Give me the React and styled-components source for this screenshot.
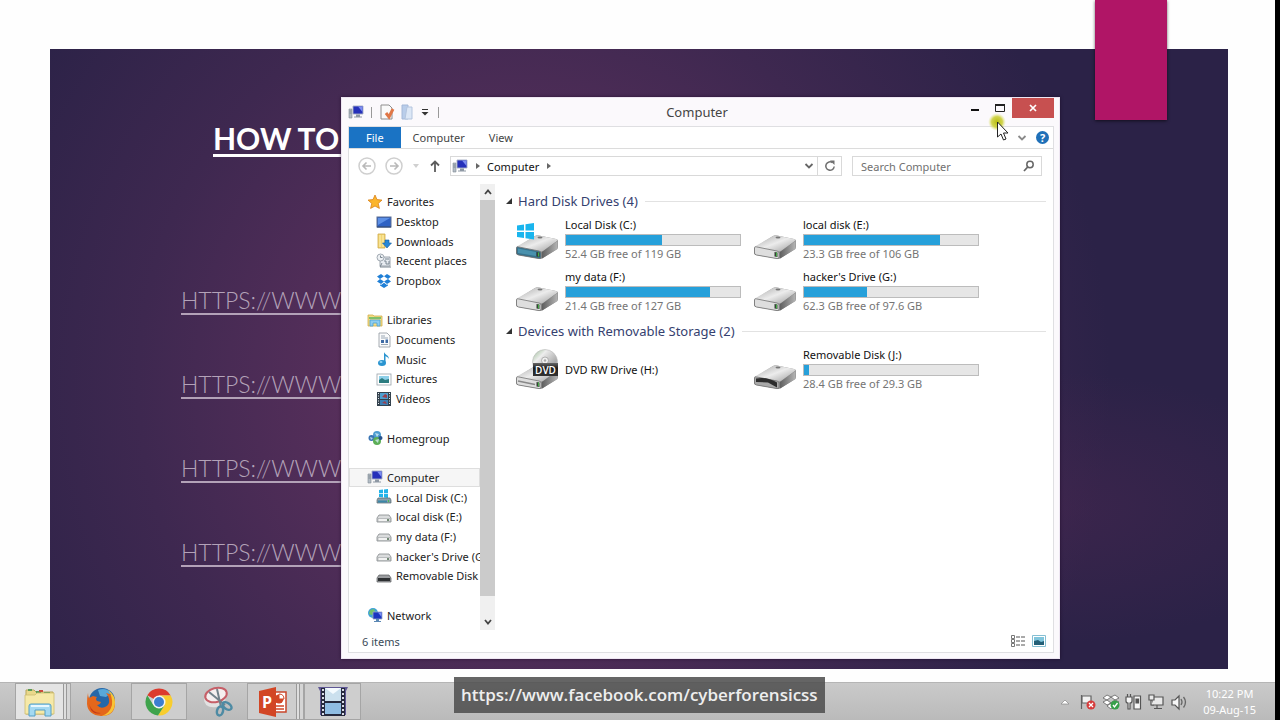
import React from 'react';
import styled, { createGlobalStyle } from 'styled-components';

const places = [
  { label: 'Favorites', icon: 'star', top: true },
  { label: 'Desktop', icon: 'desktop' },
  { label: 'Downloads', icon: 'downloads' },
  { label: 'Recent places', icon: 'recent' },
  { label: 'Dropbox', icon: 'dropbox' },
  null,
  { label: 'Libraries', icon: 'libraries', top: true },
  { label: 'Documents', icon: 'documents' },
  { label: 'Music', icon: 'music' },
  { label: 'Pictures', icon: 'pictures' },
  { label: 'Videos', icon: 'videos' },
  null,
  { label: 'Homegroup', icon: 'homegroup', top: true },
  null,
  { label: 'Computer', icon: 'computer', top: true, active: true },
  { label: 'Local Disk (C:)', icon: 'system' },
  { label: 'local disk (E:)', icon: 'drive' },
  { label: 'my data (F:)', icon: 'drive' },
  { label: "hacker's Drive (G:)", icon: 'drive' },
  { label: 'Removable Disk (J:)', icon: 'removable' },
  null,
  { label: 'Network', icon: 'network', top: true },
];

const groups = [
  {
    title: 'Hard Disk Drives (4)',
    drives: [
      { name: 'Local Disk (C:)', used: 55, info: '52.4 GB free of 119 GB', kind: 'system' },
      { name: 'local disk (E:)', used: 78, info: '23.3 GB free of 106 GB' },
      { name: 'my data (F:)', used: 83, info: '21.4 GB free of 127 GB' },
      { name: "hacker's Drive (G:)", used: 36, info: '62.3 GB free of 97.6 GB' },
    ],
  },
  {
    title: 'Devices with Removable Storage (2)',
    drives: [
      { name: 'DVD RW Drive (H:)', kind: 'dvd' },
      { name: 'Removable Disk (J:)', used: 3, info: '28.4 GB free of 29.3 GB', kind: 'removable' },
    ],
  },
];

const links = ['HTTPS://WWW', 'HTTPS://WWW', 'HTTPS://WWW', 'HTTPS://WWW'];

const glyphs = {
  star: (
    <path d="M8 1l2 4.6 5 .5-3.800 3.300 1.200 5L8 12l-4.400 2.400 1.200-5L1 6.100l5-.5z" fill="#fbb52c" stroke="#d9821a" strokeWidth=".8" />
  ),
  desktop: (
    <>
      <rect x="1" y="3" width="14" height="10" fill="#2f62c4" stroke="#5a6d92" />
      <path d="M2 4h12L2 11z" fill="#5d90e6" />
      <path d="M1 13h14" stroke="#25406f" />
    </>
  ),
  downloads: (
    <>
      <path d="M2 1h7v14H2z" fill="#f2d675" stroke="#cfa94a" strokeWidth=".8" />
      <path d="M4 2v12M7 2v12" stroke="#fff0b4" />
      <path d="M9 7h4v3h2.500L11 15 6.500 10H9z" fill="#2788d8" stroke="#14609f" strokeWidth=".6" />
    </>
  ),
  recent: (
    <>
      <path d="M4 4h10v9H4z" fill="#e7ecf1" stroke="#87919b" strokeWidth=".8" />
      <circle cx="4.500" cy="4.500" r="3.500" fill="#eef1f4" stroke="#8d97a1" strokeWidth=".8" />
      <path d="M4.500 2.500v2h2M9 6h4M8 8h2v3h3V8M6 10l-2 4h11" fill="none" stroke="#7b8792" />
    </>
  ),
  dropbox: (
    <g fill="#1f7fd6">
      <path d="M5 1l3 2.300L4 6 1 3.500z" />
      <path d="M11 1L8 3.300 12 6l3-2.500z" />
      <path d="M4 6l4 2.600L5 11 1 8.500z" />
      <path d="M12 6L8 8.600 11 11l4-2.500z" />
      <path d="M8 9.700l3 2.300 1-.7v1.200L8 15l-4-2.500v-1.200l1 .7z" />
    </g>
  ),
  libraries: (
    <>
      <path d="M1 3h5l1 1h8v10H1z" fill="#f4dc82" stroke="#d0ad4c" strokeWidth=".8" />
      <path d="M2 5h12v2H2z" fill="#7fc06b" />
      <path d="M3 14V8h10v6h-3v-3H6v3z" fill="#8dcdf0" stroke="#4aa1d3" strokeWidth=".8" />
    </>
  ),
  documents: (
    <>
      <path d="M3 1h8l3 3v11H3z" fill="#fafbfc" stroke="#8f979e" strokeWidth=".8" />
      <path d="M5 4h4M5 6h7M5 12.500h7" stroke="#9aa7b4" />
      <path d="M5 8h3v3H5zM9.500 7.500H12V11H9.500z" fill="#3f6ba5" />
    </>
  ),
  music: (
    <>
      <path d="M8 1c1 3 5 3 5 7-1-2-3-2.500-3.500-3V12H8z" fill="#2a94d0" />
      <ellipse cx="6" cy="12" rx="4" ry="3" fill="#2a94d0" />
      <ellipse cx="5" cy="11" rx="1.500" ry="1" fill="#8fd3f2" />
    </>
  ),
  pictures: (
    <>
      <rect x="1" y="3" width="14" height="11" fill="#fff" stroke="#9aa3ab" strokeWidth=".8" />
      <path d="M3 5h10v7H3z" fill="#8ed0e9" />
      <path d="M3 9l3-2 3 2 4-1v4H3z" fill="#2c7c80" />
    </>
  ),
  videos: (
    <>
      <path d="M1 1h14v14H1z" fill="#34424e" />
      <path d="M4 2h8v6H4z" fill="#4f9fd0" />
      <path d="M4 9h8v5H4z" fill="#3c7fb4" />
      <path d="M9 3l2 1v3L6 6zM6 12l3-2 2 3z" fill="#9c3e4c" />
      <path d="M2.500 2v12M13.500 2v12" stroke="#e6ebef" strokeDasharray="1 1.500" />
    </>
  ),
  homegroup: (
    <>
      <circle cx="10" cy="5" r="4" fill="#4d9cd0" />
      <circle cx="4.500" cy="8" r="3" fill="#3a75b5" />
      <circle cx="10" cy="11" r="4" fill="#5cae57" />
      <path d="M8 3l4 1-2 3zM3 7l3 1-2 2zM8 10l4-1-1 4z" fill="#d5eff6" opacity=".8" />
      <circle cx="13.500" cy="8" r="2" fill="#27528c" />
    </>
  ),
  computer: (
    <>
      <path d="M1 5h3v9H1z" fill="#b3bcc5" stroke="#7f8a94" strokeWidth=".6" />
      <path d="M1.500 7h2M1.500 9h2" stroke="#67727c" strokeWidth=".7" />
      <path d="M5 2h10v8H5z" fill="#2530ba" stroke="#a6afc4" strokeWidth=".9" />
      <path d="M10 2.500h4.500V8z" fill="#7d8df0" />
      <path d="M8 10.500h4v2h2v1H6v-1h2z" fill="#8e98a4" />
    </>
  ),
  system: (
    <>
      <path d="M3 1l4-.5v3.700H3zM8 .4L12 0v4.200H8zM3 5h4v3.500L3 8zM8 5h4v4l-4-.5z" fill="#21b4ea" />
      <path d="M2 9h12l1 2v3H1v-3z" fill="#8aa0ab" stroke="#586871" strokeWidth=".7" />
      <path d="M2 11.500h9v2H2z" fill="#3c87a8" />
      <path d="M12.500 11v2" stroke="#43c152" />
    </>
  ),
  drive: (
    <>
      <path d="M3 6h10l2 3v4H1V9z" fill="#dadcdd" stroke="#84888b" strokeWidth=".8" />
      <path d="M2 9.500h12v3H2z" fill="#f2f2f2" stroke="#9b9fa1" strokeWidth=".6" />
      <path d="M12 10v2" stroke="#49684c" strokeWidth="1.500" />
    </>
  ),
  removable: (
    <>
      <path d="M3 7h10l2 3v4H1v-4z" fill="#9b9da0" stroke="#56595c" strokeWidth=".7" />
      <path d="M2 10h12v3H2z" fill="#2d3032" />
    </>
  ),
  network: (
    <>
      <circle cx="6" cy="6" r="5" fill="#3fa2d8" />
      <path d="M3 3l4-1 1 3-3 3-3-1zM5 9l3 1-2 1z" fill="#74c16a" />
      <path d="M6 5h9v7H6z" fill="#1b35c0" stroke="#98a5c4" strokeWidth=".8" />
      <path d="M11 5.500h3.500V10z" fill="#7b90f2" />
      <path d="M9 12h3v2h2v1H7v-1h2z" fill="#5c88b4" />
    </>
  ),
};

const Glyph = ({ name, size = 16 }) => (
  <svg width={size} height={size} viewBox="0 0 16 16" aria-hidden="true">{glyphs[name]}</svg>
);

const DriveArt = ({ kind }) => (
  <svg width="44" height="44" viewBox="0 0 44 44" aria-hidden="true">
    <defs>
      <linearGradient id="lid" x1="0" y1="0" x2="1" y2="1">
        <stop offset="0" stopColor="#a5a5a5" />
        <stop offset=".5" stopColor="#ececec" />
        <stop offset="1" stopColor="#9b9b9b" />
      </linearGradient>
      <linearGradient id="side" x1="0" y1="0" x2="1" y2="0">
        <stop offset="0" stopColor="#5f5f5f" />
        <stop offset="1" stopColor="#b4b4b4" />
      </linearGradient>
      <linearGradient id="disc" x1="0" y1="0" x2="1" y2="1">
        <stop offset="0" stopColor="#93b98e" />
        <stop offset=".3" stopColor="#ededed" />
        <stop offset=".7" stopColor="#aaa" />
        <stop offset="1" stopColor="#ddd" />
      </linearGradient>
      <linearGradient id="label" x1="0" y1="0" x2="0" y2="1">
        <stop offset="0" stopColor="#666" />
        <stop offset=".4" stopColor="#1c1c1c" />
        <stop offset="1" stopColor="#333" />
      </linearGradient>
    </defs>
    <path d="M0 30L19 18q2-1 4-.6l17 3.600q2 .5 2 2v6q0 1.500-1.500 2.500L27 40q-2 1.300-4 .8L2 37q-2-.5-2-2z" fill="#8b8b8b" />
    <path d="M0 29L19 18q2-1 4-.6l17 3.600q2.500.7.500 2.200L27 33q-2 1-4 .7L2 30z" fill="url(#lid)" />
    <path d="M26 34l15.500-11v8L26 40.500z" fill="url(#side)" />
    <path d="M.5 29.500q0-1 2-.6L23 33q2 .4 2 2v4q0 2-2 1.600L2.500 37q-2-.4-2-2z" fill={kind === 'system' ? '#37718b' : kind === 'removable' ? '#a9a9a9' : '#dedede'} stroke="#747474" strokeWidth=".8" />
    {kind === 'system' && <path d="M2 30.500l18 3.500v4L2 35z" fill="#4991ad" />}
    {kind === 'removable' && <path d="M2 30.500q11-2 21 4v5L14 34.500 2 34z" fill="#2d2d2d" />}
    {kind === 'dvd' && <path d="M2 33l17 3.500" stroke="#888" strokeWidth="1.500" />}
    {kind !== 'removable' && (
      <>
        <path d="M20.500 34l3 .5v4.500L20.500 38.500z" fill="#374137" />
        <path d="M22.500 34.500v4" stroke="#42b045" strokeWidth="1" />
      </>
    )}
    <ellipse cx="24" cy="19.500" rx="2.500" ry=".9" fill="#777" />
    {kind === 'system' && (
      <path d="M1 7.500l7-1v6H1zM9.500 6.300L18 5v7.500H9.500zM1 14h7v6l-7-1zM9.500 14H18v7.500l-8.500-1.300z" fill="#19b5ee" />
    )}
    {kind === 'dvd' && (
      <>
        <circle cx="29" cy="14" r="12.500" fill="url(#disc)" stroke="#b9b9b9" strokeWidth=".6" />
        <circle cx="29" cy="12.500" r="3.500" fill="#eee" stroke="#999" strokeWidth=".7" />
        <circle cx="29" cy="12.500" r="1.200" fill="#aaa" />
        <path d="M17 15h25v13H17z" fill="url(#label)" />
        <text x="29.500" y="26" textAnchor="middle" fontSize="10" fontWeight="600" fontFamily="Open Sans, sans-serif" fill="#fff">DVD</text>
      </>
    )}
  </svg>
);

const ExplorerArt = () => (
  <svg width="32" height="32" viewBox="0 0 32 32" aria-hidden="true">
    <path d="M2 4h8l2 2h17v22H2z" fill="#ead98b" stroke="#b9a75c" />
    <path d="M4 4h4M12 6h5M20 7h6" stroke="#5b9b58" strokeWidth="2" />
    <path d="M15 5h4" stroke="#c94a3c" strokeWidth="2" />
    <path d="M1 9h10l2-2h17v21H1z" fill="#f6e9a8" stroke="#cdbb70" strokeWidth=".8" />
    <path d="M5 30V20q0-2 2-2h18q2 0 2 2v10h-6v-6H11v6z" fill="#a4d9f2" stroke="#559fc7" />
    <path d="M7 20h18" stroke="#e8f8ff" strokeWidth="2" />
  </svg>
);

const FirefoxArt = () => (
  <svg width="32" height="32" viewBox="0 0 32 32" aria-hidden="true">
    <circle cx="17" cy="15" r="13" fill="#2667a8" />
    <path d="M13 4q8-3 13 3l-5 4-6-1z" fill="#58a8d9" />
    <path d="M3 7q0 3 1 5l4-2 4 1q-2 2 0 4l4 1q-1 3-4 3 3 4 8 2 5-2 4-8-1-4-3-6 8 1 9 10 0 13-14 13Q3 29 2 18 2 11 3 7z" fill="#e4671c" />
    <path d="M23 4q7 5 7 12 0 13-13 14 8-3 10-11 1-8-4-15z" fill="#f8c436" />
    <path d="M4 18q3 9 12 9-6 2-10-3z" fill="#c53a1b" />
  </svg>
);

const ChromeArt = () => (
  <svg width="30" height="30" viewBox="0 0 30 30" aria-hidden="true">
    <path d="M15 15L3.300 8.200A13.500 13.500 0 0 1 26.700 8.500H15z" fill="#dc3b2e" />
    <path d="M26.700 8.500A13.500 13.500 0 0 1 14 28.500L20.600 18 15 8.500z" fill="#f8cd2e" />
    <path d="M3.300 8.200A13.500 13.500 0 0 0 14 28.500L20.600 18.200 15 21l-5.600-2.800z" fill="#3fa34c" />
    <circle cx="15" cy="15" r="6.500" fill="#f4f4f4" />
    <circle cx="15" cy="15" r="5" fill="#3d7ed0" />
  </svg>
);

const SnipArt = () => (
  <svg width="32" height="32" viewBox="0 0 32 32" aria-hidden="true">
    <ellipse cx="14" cy="13" rx="11" ry="8" fill="#e2e2e2" transform="rotate(-15 14 13)" />
    <ellipse cx="15" cy="9" rx="11" ry="7" fill="#f5efef" stroke="#c65f68" strokeWidth="2" transform="rotate(-15 15 9)" />
    <path d="M8 6l16 13M16 3l4 18" stroke="#73828b" strokeWidth="2" />
    <ellipse cx="26" cy="20" rx="5" ry="3" fill="none" stroke="#4e8ba4" strokeWidth="2.500" transform="rotate(35 26 20)" />
    <ellipse cx="19" cy="25" rx="3" ry="4.500" fill="none" stroke="#4e8ba4" strokeWidth="2.500" transform="rotate(15 19 25)" />
  </svg>
);

const PowerPointArt = () => (
  <svg width="32" height="32" viewBox="0 0 32 32" aria-hidden="true">
    <path d="M16 6h13v20H16z" fill="#fff" stroke="#c9472b" strokeWidth="1.500" />
    <circle cx="22" cy="13" r="4.500" fill="#d24625" />
    <path d="M22 13V8q5 0 5 5z" fill="#fff" stroke="#d24625" />
    <path d="M19 20h8M19 23h8" stroke="#d24625" strokeWidth="1.500" />
    <path d="M2 5l17-4v30L2 27z" fill="#d24625" />
    <text x="10" y="22" textAnchor="middle" fontSize="16" fontWeight="700" fontFamily="Open Sans, sans-serif" fill="#fff">P</text>
  </svg>
);

const MovieArt = () => (
  <svg width="32" height="32" viewBox="0 0 32 32" aria-hidden="true">
    <path d="M1 1h30l-2 4v24H3V5z" fill="#5f5795" />
    <path d="M4 2h24v28H4z" fill="#262a3e" />
    <path d="M8 2h16v13H8z" fill="#cbe0ee" />
    <path d="M8 17h16v11H8z" fill="#8fbde3" />
    <path d="M6 3v26M26 3v26" stroke="#dadde8" strokeWidth="2" strokeDasharray="2 2" />
    <path d="M8 2l16 0-8 6z" fill="#f5fbff" />
  </svg>
);

const TrayArt = () => (
  <svg width="128" height="20" viewBox="0 0 128 20" aria-hidden="true">
    <path d="M0 12l4-4 4 4z" fill="#fff" stroke="#888" strokeWidth=".7" />
    <path d="M20.500 3v14M21 4h9v7h-9z" fill="#f2f2f2" stroke="#626262" strokeWidth="1.200" />
    <circle cx="30" cy="13" r="4.500" fill="#d63c3c" />
    <path d="M28 11l4 4M32 11l-4 4" stroke="#fff" strokeWidth="1.300" />
    <g fill="#fff" stroke="#5f5f5f" strokeWidth=".8">
      <path d="M46 3l4 2-4 3-4-2zM54 3l4 3-4 2-4-3zM46 8l4 3-4 2-4-3zM54 8l4 2-4 3-4-2zM50 11l4 3-4 3-4-3z" />
    </g>
    <circle cx="54" cy="13" r="4.500" fill="#36a04a" />
    <path d="M52 13l1.500 2 3-4" fill="none" stroke="#fff" strokeWidth="1.300" />
    <g fill="#f6f6f6" stroke="#555" strokeWidth="1.200">
      <path d="M65 5h6v4q0 2-2 2v6h-2v-6q-2 0-2-2zM66.500 5V2M69.500 5V2M73 4h6.500v13H73z" />
      <path d="M75 7h2.500v4H75z" fill="#555" />
    </g>
    <g fill="#e9e9e9" stroke="#555" strokeWidth="1.200">
      <path d="M91 5h11v8H91zM96 13v3M93 16.500h8" />
      <path d="M88 3h5v5h-5zM90 8v5h3" />
    </g>
    <path d="M111 8h3l4-4v13l-4-4h-3z" fill="#f6f6f6" stroke="#555" strokeWidth="1.200" />
    <path d="M120 7q2 3 0 6M122.500 5q4 5 0 10.500" fill="none" stroke="#666" strokeWidth="1.300" />
  </svg>
);

const apps = [
  { name: 'File Explorer', art: <ExplorerArt />, width: 56, look: 'active', stacked: true },
  { name: 'Firefox', art: <FirefoxArt />, width: 60 },
  { name: 'Chrome', art: <ChromeArt />, width: 56, look: 'open' },
  { name: 'Snipping Tool', art: <SnipArt />, width: 60 },
  { name: 'PowerPoint', art: <PowerPointArt />, width: 57, look: 'open', stacked: true },
  { name: 'Movie Maker', art: <MovieArt />, width: 57, look: 'open' },
];

const App = () => (
  <Desktop>
    <GlobalStyle />
    <Stage>
      <Slide>
        <Heading>HOW TO&nbsp;</Heading>
        <Links>
          {links.map((link, i) => (
            <li key={i}><SlideLink href="#">{link}&nbsp;</SlideLink></li>
          ))}
        </Links>
      </Slide>
      <Ribbon />
    </Stage>

    <Window>
      <TitleBar>
        <QuickAccess>
          <Glyph name="computer" />
          <Divider />
          <QuickButton aria-label="Properties">
            <svg width="16" height="16" viewBox="0 0 16 16">
              <path d="M2 1h8l3 3v11H2z" fill="#fafafa" stroke="#8e8e8e" />
              <path d="M7 9l3 4 4-8" fill="none" stroke="#e07747" strokeWidth="3" />
            </svg>
          </QuickButton>
          <QuickButton aria-label="New folder">
            <svg width="16" height="16" viewBox="0 0 16 16">
              <path d="M3 1h6v14H3z" fill="#b9cdea" stroke="#a4b8d8" />
              <path d="M8 3h5v12H6z" fill="#dce7f6" stroke="#b4c5de" />
            </svg>
          </QuickButton>
          <QuickButton aria-label="Customize">
            <svg width="12" height="8" viewBox="0 0 12 8"><path d="M3 1.500h6" stroke="#333" /><path d="M2.500 4h7L6 7.500z" fill="#333" /></svg>
          </QuickButton>
          <Divider />
        </QuickAccess>
        <WindowTitle>Computer</WindowTitle>
        <Controls>
          <ControlButton aria-label="Minimize">
            <svg width="12" height="12" viewBox="0 0 12 12"><path d="M2 8h8" stroke="#111" strokeWidth="2" /></svg>
          </ControlButton>
          <ControlButton aria-label="Maximize">
            <svg width="12" height="12" viewBox="0 0 12 12"><path d="M1.500 2v7.500h9V2" fill="none" stroke="#222" /><path d="M1 3h10" stroke="#222" strokeWidth="2" /></svg>
          </ControlButton>
          <ControlButton aria-label="Close" $close>
            <svg width="10" height="10" viewBox="0 0 10 10"><path d="M2 2l6 6M8 2L2 8" stroke="#fff" strokeWidth="1.700" /></svg>
          </ControlButton>
        </Controls>
      </TitleBar>

      <Pane>
        <Tabs>
          <Tab $file>File</Tab>
          <Tab>Computer</Tab>
          <Tab>View</Tab>
          <TabTools>
            <svg width="10" height="8" viewBox="0 0 10 8"><path d="M1.500 2L5 5.500 8.500 2" fill="none" stroke="#8a8a8a" strokeWidth="1.800" /></svg>
            <HelpButton aria-label="Help">?</HelpButton>
          </TabTools>
        </Tabs>

        <Navigation>
          <NavButtons>
            <svg width="18" height="18" viewBox="0 0 18 18"><circle cx="9" cy="9" r="8" fill="none" stroke="#cfcfcf" strokeWidth="1.500" /><path d="M13 9H5.500M8.500 5.500L5 9l3.500 3.500" fill="none" stroke="#b9b9b9" strokeWidth="1.600" /></svg>
            <svg width="18" height="18" viewBox="0 0 18 18"><circle cx="9" cy="9" r="8" fill="none" stroke="#cfcfcf" strokeWidth="1.500" /><path d="M5 9h7.500M9.500 5.500L13 9l-3.500 3.500" fill="none" stroke="#b9b9b9" strokeWidth="1.600" /></svg>
            <svg width="8" height="6" viewBox="0 0 8 6"><path d="M1 1h6L4 5z" fill="#d0d0d0" /></svg>
            <svg width="12" height="14" viewBox="0 0 12 14"><path d="M6 13V3M2 6.500L6 2.500l4 4" fill="none" stroke="#5d5d5d" strokeWidth="1.800" /></svg>
          </NavButtons>
          <Address>
            <Glyph name="computer" />
            <Chevron />
            <AddressText>Computer</AddressText>
            <Chevron />
            <AddressEnd>
              <svg width="10" height="8" viewBox="0 0 10 8"><path d="M1.500 2L5 5.500 8.500 2" fill="none" stroke="#666" strokeWidth="1.800" /></svg>
            </AddressEnd>
            <RefreshButton aria-label="Refresh">
              <svg width="12" height="12" viewBox="0 0 12 12"><path d="M8.500 2.600A4.200 4.200 0 1 0 10.200 6.500" fill="none" stroke="#707070" strokeWidth="1.500" /><path d="M6 .5h4.500V5z" fill="#707070" /></svg>
            </RefreshButton>
          </Address>
          <SearchBox>
            <SearchInput aria-label="Search Computer" placeholder="Search Computer" />
            <svg width="12" height="12" viewBox="0 0 12 12"><circle cx="7" cy="4.500" r="3.200" fill="none" stroke="#666" strokeWidth="1.500" /><path d="M4.700 7L1 11" stroke="#666" strokeWidth="1.800" /></svg>
          </SearchBox>
        </Navigation>

        <Body>
          <Sidebar>
            {places.map((place, i) => place ? (
              <Place key={i} $top={place.top} $active={place.active}>
                <Glyph name={place.icon} />
                {place.label}
              </Place>
            ) : <li key={i} />)}
          </Sidebar>
          <Scrollbar>
            <ScrollButton aria-label="Scroll up"><svg width="10" height="8" viewBox="0 0 10 8"><path d="M2 6l3-3.500L8 6" fill="none" stroke="#444" strokeWidth="1.800" /></svg></ScrollButton>
            <Thumb />
            <ScrollButton aria-label="Scroll down"><svg width="10" height="8" viewBox="0 0 10 8"><path d="M2 2l3 3.500L8 2" fill="none" stroke="#444" strokeWidth="1.800" /></svg></ScrollButton>
          </Scrollbar>
          <Content>
            {groups.map(group => (
              <section key={group.title}>
                <GroupTitle>
                  <svg width="8" height="8" viewBox="0 0 8 8"><path d="M7 1v6H1z" fill="#333" /></svg>
                  {group.title}
                </GroupTitle>
                <Drives>
                  {group.drives.map(drive => (
                    <Drive key={drive.name}>
                      <DriveArt kind={drive.kind} />
                      <DriveText>
                        <DriveName>{drive.name}</DriveName>
                        {drive.info && (
                          <>
                            <Bar><Fill style={{ width: `${drive.used}%` }} /></Bar>
                            <DriveInfo>{drive.info}</DriveInfo>
                          </>
                        )}
                      </DriveText>
                    </Drive>
                  ))}
                </Drives>
              </section>
            ))}
          </Content>
        </Body>

        <StatusBar>
          6 items
          <ViewButtons>
            <svg width="14" height="12" viewBox="0 0 14 12">
              <path d="M.5.500h3v3h-3zM.5 4.500h3v3h-3zM.5 8.500h3v3h-3z" fill="#fff" stroke="#777" />
              <path d="M5 2h4M10 2h4M5 6h4M10 6h4M5 10h4M10 10h4" stroke="#555" />
            </svg>
            <svg width="14" height="12" viewBox="0 0 14 12">
              <path d="M.5.500h13v11H.5z" fill="#fff" stroke="#85bfd3" />
              <path d="M2 2h10v8H2z" fill="#80c5dc" />
              <path d="M2 6l4-1 3 2 3-1v4H2z" fill="#235f77" />
            </svg>
          </ViewButtons>
        </StatusBar>
      </Pane>
    </Window>

    <Pointer>
      <svg width="26" height="30" viewBox="0 0 26 30" aria-hidden="true">
        <defs>
          <radialGradient id="spot">
            <stop offset="0" stopColor="#b8bd10" />
            <stop offset=".6" stopColor="#ccd03c" stopOpacity=".9" />
            <stop offset="1" stopColor="#e8ea98" stopOpacity="0" />
          </radialGradient>
        </defs>
        <circle cx="10" cy="9" r="9" fill="url(#spot)" />
        <path d="M10.500 9v15l3.500-3 2.500 6 2.500-1-2.500-6H21z" fill="#fff" stroke="#222" />
      </svg>
    </Pointer>

    <Taskbar>
      {apps.map(app => (
        <AppButton key={app.name} aria-label={app.name} $width={app.width} $look={app.look} $stacked={app.stacked}>
          {app.art}
        </AppButton>
      ))}
      <Tray>
        <TrayArt />
        <Clock>
          <span>10:22 PM</span>
          <span>09-Aug-15</span>
        </Clock>
      </Tray>
    </Taskbar>

    <Watermark>https://www.facebook.com/cyberforensicss</Watermark>
  </Desktop>
);

export default App;



const GlobalStyle = createGlobalStyle`
  * {
    box-sizing: border-box;
  }
  body {
    margin: 0;
    background: #000;
    font-family: 'Noto Sans', 'Open Sans', sans-serif;
    font-size: 11px;
    color: #222;
  }
  button, input {
    font: inherit;
    color: inherit;
    border: none;
    background: none;
    padding: 0;
  }
  ul {
    list-style: none;
    margin: 0;
    padding: 0;
  }
  svg {
    display: block;
    flex: none;
  }
`;

const Desktop = styled.div`
  position: relative;
  min-height: 100vh;
  margin-right: 5px;
  display: flex;
  flex-direction: column;
  background: #fefefe;
`;

const Stage = styled.div`
  position: relative;
  flex: 1;
  display: flex;
  padding: 49px 47px 13px 50px;
`;

const Slide = styled.main`
  flex: 1;
  padding: 69px 131px;
  font-family: Lato, sans-serif;
  background:
    radial-gradient(ellipse 26% 22% at 84% 74%, rgba(76, 40, 82, 0.5), transparent),
    radial-gradient(ellipse 50% 100% at 40% 54%, #653263 0%, #572f5b 30%, #3e2850 65%, #2b2247 100%);
`;

const Heading = styled.h1`
  margin: 0 0 122px 32px;
  font-size: 30px;
  line-height: 40px;
  font-weight: 700;
  color: #fff;
  white-space: nowrap;
  text-decoration: underline;
  text-decoration-thickness: 3px;
  text-underline-offset: 4px;
`;

const Links = styled.ul`
  display: grid;
  gap: 44px;
  font-size: 23px;
  line-height: 40px;
`;

const SlideLink = styled.a`
  font-weight: 300;
  color: #b3a2b8;
  text-decoration-thickness: 2px;
  text-underline-offset: 4px;
`;

const Ribbon = styled.div`
  position: absolute;
  top: 0;
  right: 108px;
  width: 72px;
  height: 120px;
  background: #b01566;
  box-shadow: 0 1px 3px rgba(0, 0, 0, 0.6);
`;

const Window = styled.section`
  position: absolute;
  inset: 97px 215px 61px 341px;
  display: flex;
  flex-direction: column;
  padding: 0 5px 5px 6px;
  background: #fbf9fc;
  border: 1px solid #eee6f2;
  box-shadow: 0 0 3px rgba(20, 0, 30, 0.6);
`;

const TitleBar = styled.header`
  display: grid;
  grid-template-columns: 1fr auto 1fr;
  height: 28px;
`;

const QuickAccess = styled.div`
  display: flex;
  align-items: center;
  gap: 4px;
`;

const QuickButton = styled.button`
  display: flex;
`;

const Divider = styled.span`
  width: 1px;
  height: 11px;
  margin: 0 3px;
  background: #999;
`;

const WindowTitle = styled.h2`
  margin: 0;
  padding-right: 8px;
  font-size: 13px;
  line-height: 28px;
  font-weight: 400;
  color: #444;
`;

const Controls = styled.div`
  display: flex;
  justify-content: flex-end;
`;

const ControlButton = styled.button`
  display: flex;
  align-items: center;
  justify-content: center;
  width: ${({ $close }) => ($close ? '42px' : '25px')};
  height: 20px;
  background: ${({ $close }) => ($close ? '#c75050' : 'none')};
`;

const Pane = styled.div`
  flex: 1;
  min-height: 0;
  display: flex;
  flex-direction: column;
  background: #fff;
  border: 1px solid #dfdfe2;
`;

const Tabs = styled.nav`
  display: flex;
  height: 22px;
  border-bottom: 1px solid #dcdcdc;
`;

const Tab = styled.button`
  padding: 0 ${({ $file }) => ($file ? '17px' : '12px')};
  line-height: 22px;
  color: ${({ $file }) => ($file ? '#fff' : '#444')};
  background: ${({ $file }) => ($file ? '#1a73c4' : 'none')};
`;

const TabTools = styled.div`
  display: flex;
  align-items: center;
  gap: 9px;
  margin-left: auto;
  padding-right: 4px;
`;

const HelpButton = styled.button`
  width: 13px;
  height: 13px;
  border-radius: 50%;
  background: #1f70b8;
  color: #fff;
  font-weight: 700;
  line-height: 13px;
`;

const Navigation = styled.div`
  display: flex;
  align-items: center;
  height: 35px;
  padding: 0 11px 1px 9px;
`;

const NavButtons = styled.div`
  display: flex;
  align-items: center;
  gap: 9px;
  margin-right: 9px;
`;

const Address = styled.div`
  flex: 1;
  display: flex;
  align-items: center;
  height: 20px;
  padding-left: 1px;
  border: 1px solid #d9d9d9;
`;

const AddressText = styled.span`
  color: #111;
`;

const Chevron = styled.i`
  margin: 0 7px 0 8px;
  border: 3px solid transparent;
  border-left: 4px solid #666;
  border-right: none;
`;

const AddressEnd = styled.div`
  margin-left: auto;
  margin-right: 3px;
`;

const RefreshButton = styled.button`
  display: flex;
  align-items: center;
  justify-content: center;
  width: 24px;
  height: 18px;
  border-left: 1px solid #d9d9d9;
`;

const SearchBox = styled.div`
  display: flex;
  align-items: center;
  width: 190px;
  height: 20px;
  margin-left: 10px;
  padding: 0 6px 0 8px;
  border: 1px solid #d9d9d9;
`;

const SearchInput = styled.input`
  flex: 1;
  min-width: 0;
  outline: none;
  &::placeholder {
    color: #707070;
    opacity: 1;
  }
`;

const Body = styled.div`
  flex: 1;
  min-height: 0;
  display: flex;
`;

const Sidebar = styled.ul`
  display: grid;
  grid-auto-rows: 1fr;
  width: 131px;
  padding: 8px 0 5px;
`;

const Place = styled.li`
  display: flex;
  align-items: center;
  gap: 4px;
  min-width: 0;
  overflow: hidden;
  white-space: nowrap;
  padding-left: ${({ $top }) => ($top ? '18px' : '27px')};
  background: ${({ $active }) => ($active ? '#f6f6f6' : 'none')};
  box-shadow: ${({ $active }) => ($active ? 'inset 0 0 0 1px #dedede' : 'none')};
`;

const Scrollbar = styled.div`
  display: flex;
  flex-direction: column;
  width: 15px;
  background: #f0f0f0;
`;

const ScrollButton = styled.button`
  display: flex;
  align-items: center;
  justify-content: center;
  height: 16px;
`;

const Thumb = styled.div`
  flex: 1;
  margin-bottom: 18px;
  background: #cbcbcb;
`;

const Content = styled.div`
  flex: 1;
  display: flex;
  flex-direction: column;
  gap: 6px;
  padding: 7px 7px 0 10px;
`;

const GroupTitle = styled.h3`
  display: flex;
  align-items: center;
  gap: 5px;
  height: 20px;
  margin: 0 0 6px;
  font-size: 13px;
  font-weight: 400;
  color: #35416f;
  &::after {
    content: '';
    flex: 1;
    height: 1px;
    margin-left: 2px;
    background: #e2e2e2;
  }
`;

const Drives = styled.div`
  display: grid;
  grid-template-columns: repeat(auto-fill, 225px);
  gap: 6px 13px;
  padding-left: 11px;
`;

const Drive = styled.div`
  display: flex;
  align-items: center;
  gap: 5px;
  height: 46px;
`;

const DriveText = styled.div`
  flex: 1;
`;

const DriveName = styled.div`
  line-height: 15px;
  margin-bottom: 2px;
  color: #111;
`;

const Bar = styled.div`
  height: 12px;
  background: #e6e6e6;
  border: 1px solid #bcbcbc;
`;

const Fill = styled.div`
  height: 100%;
  background: #26a0da;
`;

const DriveInfo = styled.div`
  line-height: 15px;
  margin-bottom: 2px;
  color: #757575;
`;

const StatusBar = styled.footer`
  display: flex;
  align-items: center;
  height: 22px;
  padding: 0 7px 0 13px;
  color: #3a4a58;
`;

const ViewButtons = styled.div`
  display: flex;
  gap: 7px;
  margin-left: auto;
`;

const Pointer = styled.div`
  position: absolute;
  top: 113px;
  right: 262px;
`;

const Taskbar = styled.footer`
  display: flex;
  height: 38px;
  padding-left: 15px;
  border-top: 1px solid #b5b5b5;
  background: linear-gradient(#cacaca, #bababa);
`;

const AppButton = styled.button`
  display: flex;
  align-items: center;
  justify-content: center;
  width: ${({ $width }) => $width}px;
  padding-right: ${({ $stacked }) => ($stacked ? '6px' : '0')};
  border: 1px solid ${({ $look }) => ($look ? '#a5a5a5' : 'transparent')};
  background: ${({ $look }) => ($look === 'active' ? '#e4e4e4' : $look ? '#cecece' : 'none')};
  box-shadow: ${({ $stacked }) => ($stacked ? 'inset -3px 0 #d5d5d5, inset -4px 0 #999, inset -6px 0 #dedede, inset -7px 0 #999' : 'none')};
`;

const Tray = styled.div`
  display: flex;
  align-items: center;
  gap: 14px;
  margin-left: auto;
  padding-right: 19px;
`;

const Clock = styled.time`
  display: flex;
  flex-direction: column;
  align-items: center;
  line-height: 16px;
  color: #fff;
`;

const Watermark = styled.div`
  position: absolute;
  bottom: 7px;
  left: 454px;
  padding: 0 7px;
  font-family: 'Open Sans', sans-serif;
  font-size: 17px;
  line-height: 36px;
  font-weight: 600;
  color: #eee;
  background: rgba(80, 80, 80, 0.88);
`;
